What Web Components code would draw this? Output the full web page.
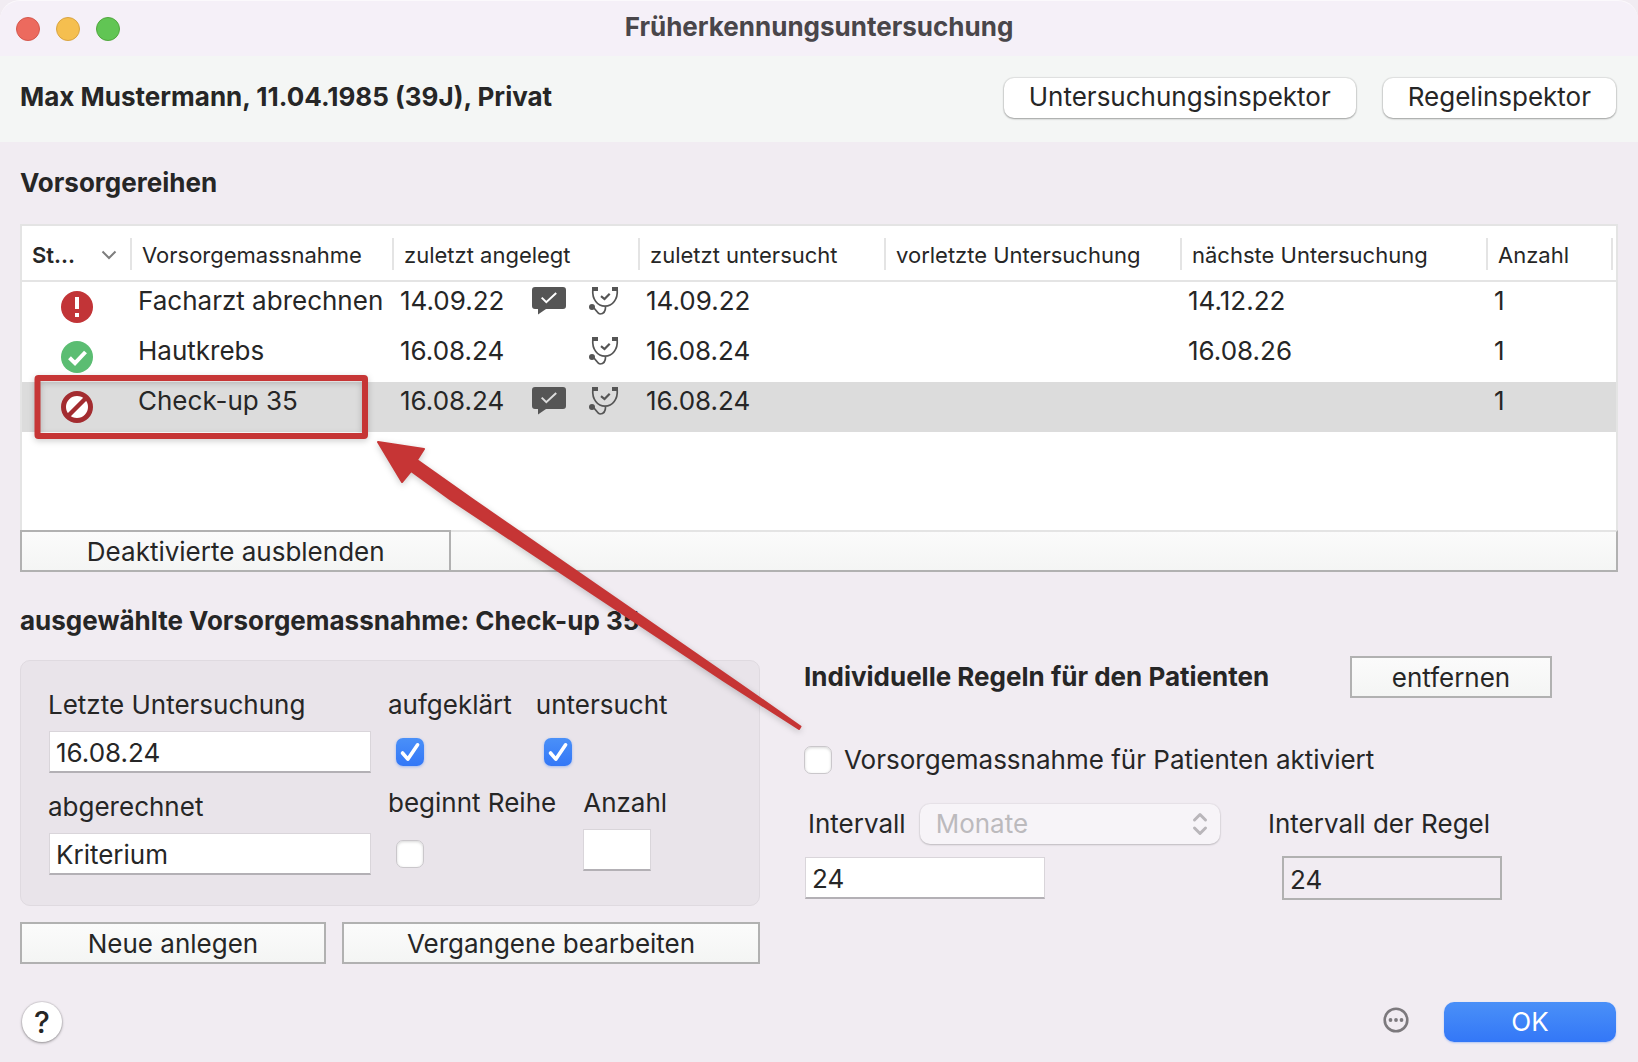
<!DOCTYPE html>
<html lang="de">
<head>
<meta charset="utf-8">
<title>Früherkennungsuntersuchung</title>
<style>
  html, body { margin: 0; }
  body { font: 26px/30px Inter, "Liberation Sans", sans-serif; color: #262626; background: #f1ecf2; }
</style>
</head>
<body>
<screening-window></screening-window>

<script>
const define = (name, html, init) => {
  const template = document.createElement('template');
  template.innerHTML = '<style>*{box-sizing:border-box}button,input,select{font:inherit;color:inherit;margin:0}</style>' + html;
  customElements.define(name, class extends HTMLElement {
    constructor() {
      super();
      this.attachShadow({ mode: 'open' }).append(template.content.cloneNode(true));
    }
    connectedCallback() {
      if (init) init.call(this, this.shadowRoot);
    }
  });
};

/* Push button; kind = rounded (default), square, primary */
define('push-button', `
  <style>
    :host { display: block; }
    button { display: block; width: 100%; height: 40px; padding: 0 25px 2px; border: 0; border-radius: 10px; background: #fff;
      line-height: 30px; white-space: nowrap; box-shadow: 0 0 1px 1px rgba(0,0,0,.08), 0 1px 2px rgba(0,0,0,.3); }
    :host([kind=square]) button { height: 42px; padding: 2px 0 0; border: 2px solid #b1b1b1; border-radius: 0; box-shadow: none;
      background: linear-gradient(#fbfbfb, #f4f5f4); }
    :host([kind=primary]) button { padding: 0; color: #fff; background: linear-gradient(#4a90f8, #3377f7);
      box-shadow: 0 1px 2px rgba(51,119,247,.35); }
  </style>
  <button type="button"><slot></slot></button>`);

/* Text field with its label above */
define('text-field', `
  <style>
    :host { display: block; }
    label { display: block; height: 30px; margin-bottom: 11px; white-space: nowrap; }
    :host([bare]) label { display: none; }
    input { display: block; width: var(--field-width, 100%); height: 42px; padding: 2px 6px 0; margin-left: var(--field-indent, 1px);
      border: 1px solid #d9d5da; border-bottom: 2px solid #b3b0b5; border-radius: 0; background: #fff; outline: 0; }
    input:read-only { height: 44px; border: 2px solid #b1b1b1; background: transparent; }
  </style>
  <label for="field"></label><input id="field" type="text">`,
  function (root) {
    const input = root.querySelector('input');
    root.querySelector('label').textContent = this.getAttribute('label');
    input.value = this.getAttribute('value') || '';
    input.readOnly = this.hasAttribute('readonly');
    if (this.hasAttribute('bare')) input.setAttribute('aria-label', this.getAttribute('label'));
  });

/* Tick box; label above, or beside it with the "inline" attribute */
define('tick-field', `
  <style>
    :host { display: block; }
    .field { display: flex; flex-direction: column; gap: 11px; }
    label { white-space: nowrap; }
    .box { display: grid; align-items: center; width: 28px; height: var(--box-height, 42px); margin-left: 8px; }
    .box > * { grid-area: 1 / 1; }
    :host([inline]) .field { flex-direction: row-reverse; justify-content: flex-end; align-items: center; gap: 12px; }
    :host([inline]) .box { height: 30px; margin-left: 0; }
    input { appearance: none; width: 28px; height: 28px; border-radius: 7px; background: #fff; border: 1px solid #cac7cb;
      box-shadow: inset 0 1px 3px rgba(0,0,0,.16); }
    input:checked { border: 0; background: linear-gradient(#4a90f8, #3377f7); box-shadow: 0 1px 3px rgba(51,119,247,.4); }
    svg { display: none; pointer-events: none; }
    input:checked + svg { display: block; }
  </style>
  <div class="field">
    <label for="tick"></label>
    <span class="box">
      <input id="tick" type="checkbox">
      <svg width="28" height="28" viewBox="0 0 28 28" fill="none" stroke="#fff" stroke-width="3.6" stroke-linecap="round" stroke-linejoin="round"><path d="M6.5 15l5.3 6.2L21.6 6.8"/></svg>
    </span>
  </div>`,
  function (root) {
    root.querySelector('label').textContent = this.getAttribute('label');
    root.querySelector('input').checked = this.hasAttribute('checked');
  });

define('popup-field', `
  <style>
    :host { display: flex; align-items: center; gap: 14px; }
    .popup { flex: 1; display: grid; align-items: center; }
    .popup > * { grid-area: 1 / 1; }
    select { appearance: none; width: 100%; height: 40px; padding: 0 16px; border: 0; border-radius: 10px; background: #f7f4f8;
      color: #bcbabd; opacity: 1; box-shadow: 0 0 1px 1px rgba(0,0,0,.04), 0 1px 2px rgba(0,0,0,.18); }
    svg { justify-self: end; margin-right: 12px; pointer-events: none; }
  </style>
  <label for="unit">Intervall</label>
  <span class="popup">
    <select id="unit" disabled><option>Monate</option></select>
    <svg width="16" height="24" viewBox="0 0 16 24" fill="none" stroke="#b9b6ba" stroke-width="3" stroke-linecap="round" stroke-linejoin="round"><path d="M2.5 8L8 2.5 13.5 8M2.5 16L8 21.5 13.5 16"/></svg>
  </span>`);

const ICONS = {
  alert: '<svg width="32" height="32" viewBox="0 0 32 32"><circle cx="16" cy="16" r="16" fill="#c23437"/><path d="M14 6h4v12h-4zM14 22h4v4h-4z" fill="#fff"/></svg>',
  done: '<svg width="32" height="32" viewBox="0 0 32 32"><circle cx="16" cy="16" r="16" fill="#5bbd72"/><path d="M8.5 16.8l5.5 5.4L24.5 11" fill="none" stroke="#fff" stroke-width="4"/></svg>',
  blocked: '<svg width="32" height="32" viewBox="0 0 32 32"><circle cx="16" cy="16" r="13.5" fill="#fff" stroke="#a32c30" stroke-width="5"/><path d="M6.5 25.5l19-19" stroke="#a32c30" stroke-width="4.4"/></svg>',
  comment: '<svg width="34" height="28" viewBox="0 0 34 28"><path d="M3 0h28a3 3 0 0 1 3 3v16a3 3 0 0 1-3 3H14l-8 5.5V22H3a3 3 0 0 1-3-3V3a3 3 0 0 1 3-3z" fill="#555"/><path d="M9.7 10.6l4.6 4.6L24.2 6" fill="none" stroke="var(--row)" stroke-width="2"/></svg>',
  scope: '<svg width="30" height="28" viewBox="0 0 30 28" fill="none" stroke="#555" stroke-width="1.7"><path d="M3.8 3C3 12 8.500 19.200 16 19.200S29 12 28.200 3M16.600 19.200C16.600 25 14 27 11 27S7 21.500 3.500 20"/><path d="M12 9.200l3.500 2.800 5.200-5.300" stroke-width="2.200"/><path d="M3 0h6v4H3zM23 0h6v4h-6z" fill="#555" stroke="none"/><circle cx="3" cy="20" r="3" fill="#555" stroke="none"/></svg>'
};

define('screening-table', `
  <style>
    :host { display: flex; flex-direction: column; flex: 1; }
    .frame { flex: 1; border: 2px solid #e4e4e4; border-bottom: 0; background: #fff; }
    table { width: 100%; table-layout: fixed; border-collapse: separate; border-spacing: 0; }
    th { height: 56px; padding: 0; border-bottom: 2px solid #e4e4e4; text-align: left; vertical-align: top;
      font-size: 22px; font-weight: 400; white-space: nowrap; }
    th span { display: flex; justify-content: space-between; align-items: center; height: 32px; margin-top: 12px;
      padding: 2px 13px 0 10px; border-right: 2px solid #e4e4e4; }
    th:last-child { padding-right: 3px; }
    th b { font-weight: 600; }
    td { height: 50px; padding: 4px 0 0 6px; vertical-align: top; background: var(--row); white-space: nowrap; }
    tr { --row: #fff; }
    tr.selected { --row: #dcdcdc; }
    svg { display: block; }
    .status { padding: 9px 0 0 39px; }
    .created { display: grid; grid-template-columns: 132px 57px auto; align-items: center; height: 30px; }
    .bar { display: flex; height: 42px; }
    .bar push-button { flex: 0 0 27%; }
    .rest { flex: 1; border: 2px solid #b1b1b1; border-left: 0; border-top-color: #e4e4e4; background: linear-gradient(#fbfbfb, #f4f5f4); }
  </style>
  <div class="frame">
    <table>
      <colgroup><col style="width:110px"><col style="width:262px"><col style="width:246px"><col style="width:246px"><col style="width:296px"><col style="width:306px"><col></colgroup>
      <thead><tr>
        <th><span><b>St...</b><svg width="16" height="10" viewBox="0 0 16 10" fill="none" stroke="#7d7d7d" stroke-width="2"><path d="M1.500 1.500L8 8l6.500-6.500"/></svg></span></th>
        <th><span>Vorsorgemassnahme</span></th><th><span>zuletzt angelegt</span></th><th><span>zuletzt untersucht</span></th>
        <th><span>vorletzte Untersuchung</span></th><th><span>nächste Untersuchung</span></th><th><span>Anzahl</span></th>
      </tr></thead>
      <tbody></tbody>
    </table>
  </div>
  <div class="bar"><push-button kind="square">Deaktivierte ausblenden</push-button><div class="rest"></div></div>`,
  function (root) {
    const rows = [
      ['alert', 'Facharzt abrechnen', '14.09.22', true, '14.09.22', '14.12.22'],
      ['done', 'Hautkrebs', '16.08.24', false, '16.08.24', '16.08.26'],
      ['blocked', 'Check-up 35', '16.08.24', true, '16.08.24', '']
    ];
    root.querySelector('tbody').innerHTML = rows.map(([icon, name, created, comment, examined, next]) => `
      <tr class="${icon === 'blocked' ? 'selected' : ''}">
        <td class="status">${ICONS[icon]}</td><td>${name}</td>
        <td><div class="created"><span>${created}</span><span>${comment ? ICONS.comment : ''}</span>${ICONS.scope}</div></td>
        <td>${examined}</td><td></td><td>${next}</td><td>1</td>
      </tr>`).join('');
  });

define('title-bar', `
  <style>
    :host { display: grid; grid-template-columns: 1fr auto 1fr; align-items: center; height: 56px; padding: 0 16px;
      background: #f5f0f8; border-top: 1px solid #fbf9fc; border-radius: 20px 20px 0 0; }
    .lights { display: flex; gap: 16px; }
    i { width: 24px; height: 24px; border-radius: 50%; background: #ec6a5e; border: 1px solid #d5584d; }
    i:nth-child(2) { background: #f5bf4f; border-color: #d9a441; }
    i:nth-child(3) { background: #61c554; border-color: #51a73e; }
    h1 { margin: 0; padding-bottom: 3px; font-size: 26px; font-weight: 700; line-height: 30px; color: #49464a; }
  </style>
  <div class="lights"><i></i><i></i><i></i></div><h1><slot></slot></h1>`);

define('exam-panel', `
  <style>
    :host { display: flex; gap: 17px; padding: 29px 27px 26px; border: 1px solid #dfdae0; border-radius: 10px; background: #e9e4ea; }
    .dates { flex: 0 0 322px; display: flex; flex-direction: column; gap: 19px; --field-width: 322px; }
    .flags { display: flex; flex-direction: column; gap: 15px; }
    .row { display: flex; gap: 24px; }
    .row + .row { gap: 27px; --box-height: 50px; --field-width: 68px; --field-indent: 0px; }
  </style>
  <div class="dates">
    <text-field label="Letzte Untersuchung" value="16.08.24"></text-field>
    <text-field label="abgerechnet" value="Kriterium"></text-field>
  </div>
  <div class="flags">
    <div class="row"><tick-field label="aufgeklärt" checked></tick-field><tick-field label="untersucht" checked></tick-field></div>
    <div class="row"><tick-field label="beginnt Reihe"></tick-field><text-field label="Anzahl"></text-field></div>
  </div>`);

define('rule-panel', `
  <style>
    :host { display: block; }
    .head { display: flex; justify-content: space-between; align-items: center; max-width: 748px; }
    .head push-button { width: 202px; }
    h2 { margin: 0; font-size: 26px; font-weight: 700; white-space: nowrap; }
    tick-field { margin-top: 47px; }
    .interval { display: grid; grid-template-columns: 412px auto; justify-content: start; column-gap: 48px; row-gap: 12px;
      align-items: center; margin: 29px 0 0 4px; --field-indent: 0px; }
    popup-field { height: 40px; }
    .own { --field-width: 240px; margin-left: -3px; }
    .rule { --field-width: 220px; margin-left: 14px; }
  </style>
  <div class="head"><h2>Individuelle Regeln für den Patienten</h2><push-button kind="square">entfernen</push-button></div>
  <tick-field inline label="Vorsorgemassnahme für Patienten aktiviert"></tick-field>
  <div class="interval">
    <popup-field></popup-field><span>Intervall der Regel</span>
    <text-field class="own" bare label="Intervall" value="24"></text-field>
    <text-field class="rule" bare readonly label="Intervall der Regel" value="24"></text-field>
  </div>`);

/* Red frame round the selected row and the arrow that points at it */
define('red-marker', `
  <style>
    :host { position: absolute; inset: 0; pointer-events: none; }
    svg { display: block; filter: drop-shadow(0 2px 3px rgba(0,0,0,.2)); }
  </style>
  <svg width="840" height="760" viewBox="0 0 840 760">
    <rect x="37.500" y="378" width="327.500" height="58" rx="1" fill="none" stroke="#c63535" stroke-width="6" stroke-linejoin="round"/>
    <path d="M378 442L424 449 417 460 475 501 734 680 800.500 726.500 799 729 724 681 451 500 411 471 402 482z" fill="#c63535" stroke="#c63535" stroke-width="2" stroke-linejoin="round"/>
  </svg>`);

define('screening-window', `
  <style>
    :host { position: relative; display: flex; flex-direction: column; min-height: 100vh; background: #f1ecf2; }
    header { display: flex; align-items: center; gap: 27px; height: 86px; padding: 0 22px 2px 20px; background: #f4f6f5; }
    header h2 { flex: 1; padding-bottom: 2px; }
    main { flex: 1; display: flex; flex-direction: column; padding: 26px 20px 0; }
    h2 { margin: 0; font-size: 26px; font-weight: 700; line-height: 30px; }
    main > h2:first-child { margin-bottom: 26px; }
    main > h2 { margin: 34px 0 20px; }
    main > h2:first-child { margin-top: 0; }
    .details { display: grid; grid-template-columns: 740fr 814fr; column-gap: 44px; }
    .exam { padding-top: 4px; }
    .actions { display: grid; grid-template-columns: 306fr 418fr; gap: 16px; margin-top: 16px; }
    footer { display: flex; align-items: center; padding: 38px 22px 20px; }
    .help { width: 40px; height: 40px; padding: 0; border: 0; border-radius: 50%; background: #fff; font-size: 30px; font-weight: 500;
      box-shadow: 0 0 1px 1px rgba(0,0,0,.08), 0 1px 3px rgba(0,0,0,.35); }
    .more { display: flex; margin: 0 35px 4px auto; padding: 0; border: 0; background: none; }
    footer push-button { width: 172px; }
  </style>
  <title-bar>Früherkennungsuntersuchung</title-bar>
  <header>
    <h2>Max Mustermann, 11.04.1985 (39J), Privat</h2>
    <push-button>Untersuchungsinspektor</push-button>
    <push-button>Regelinspektor</push-button>
  </header>
  <main>
    <h2>Vorsorgereihen</h2>
    <screening-table></screening-table>
    <h2>ausgewählte Vorsorgemassnahme: Check-up 35</h2>
    <div class="details">
      <div class="exam">
        <exam-panel></exam-panel>
        <div class="actions"><push-button kind="square">Neue anlegen</push-button><push-button kind="square">Vergangene bearbeiten</push-button></div>
      </div>
      <rule-panel></rule-panel>
    </div>
  </main>
  <footer>
    <button class="help" type="button">?</button>
    <button class="more" type="button" aria-label="Mehr"><svg width="26" height="26" viewBox="0 0 26 26"><circle cx="13" cy="13" r="11.300" fill="none" stroke="#7c797d" stroke-width="2.600"/><g fill="#7c797d"><circle cx="7.500" cy="13" r="1.900"/><circle cx="13" cy="13" r="1.900"/><circle cx="18.500" cy="13" r="1.900"/></g></svg></button>
    <push-button kind="primary">OK</push-button>
  </footer>
  <red-marker></red-marker>`);
</script>
</body>
</html>
